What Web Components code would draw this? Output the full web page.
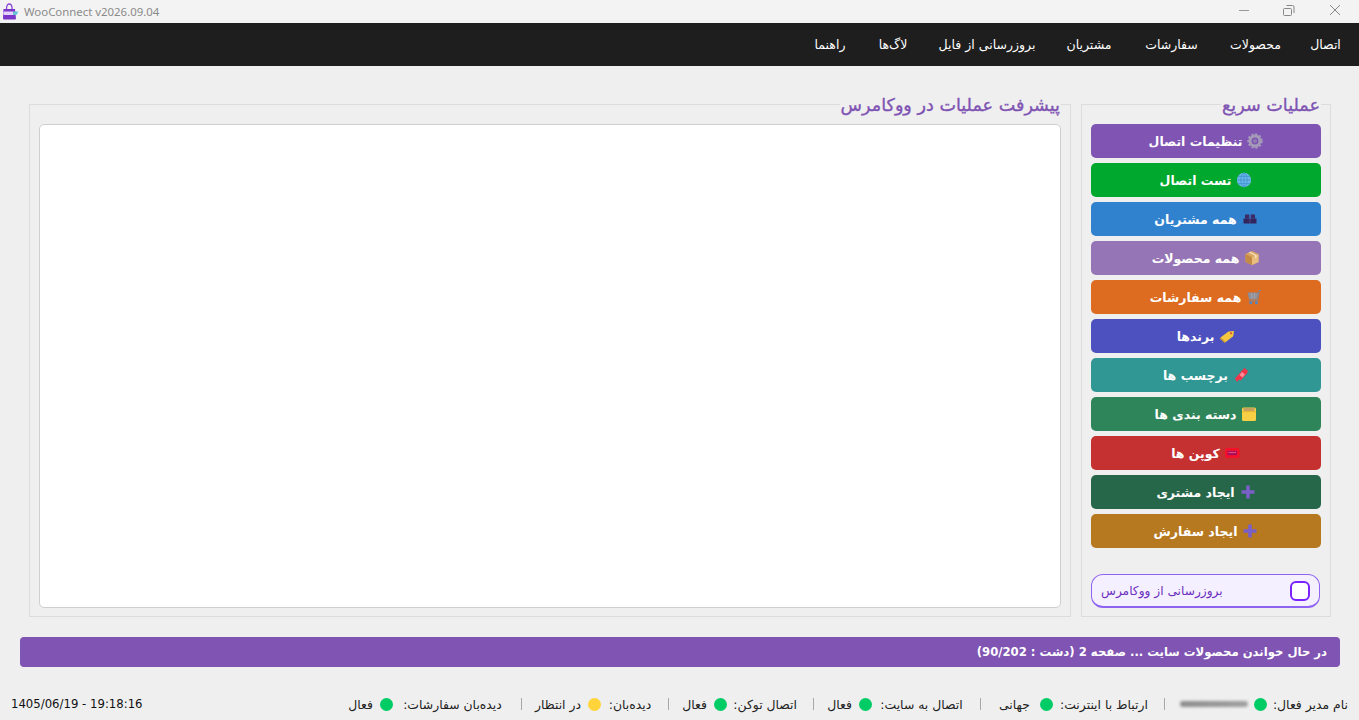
<!DOCTYPE html>
<html lang="fa"><head><meta charset="utf-8"><title>WooConnect</title>
<style>
html,body{margin:0;height:100%;background:#efefef;font-family:"DejaVu Sans",sans-serif}
body{display:flex;flex-direction:column;height:720px;overflow:hidden}
</style></head><body>
<win-titlebar title-text="WooConnect v2026.09.04"></win-titlebar>
<menu-bar items="اتصال:29|محصولات:51|سفارشات:57|مشتریان:48|بروزرسانی از فایل:96|لاگ‌ها:32|راهنما:34"></menu-bar>
<main-area>
  <group-box slot="side" heading="عملیات سریع">
    <action-button color="#7f54b3" icon="gear">تنظیمات اتصال</action-button>
    <action-button color="#00a82d" icon="globe">تست اتصال</action-button>
    <action-button color="#3182ce" icon="busts">همه مشتریان</action-button>
    <action-button color="#9575b5" icon="box">همه محصولات</action-button>
    <action-button color="#dd6b20" icon="cart">همه سفارشات</action-button>
    <action-button color="#4c51bf" icon="tag">برندها</action-button>
    <action-button color="#319795" icon="pin">برچسب ها</action-button>
    <action-button color="#2f855a" icon="folder">دسته بندی ها</action-button>
    <action-button color="#c53030" icon="ticket">کوپن ها</action-button>
    <action-button color="#276749" icon="plus">ایجاد مشتری</action-button>
    <action-button color="#b7791f" icon="plus">ایجاد سفارش</action-button>
    <check-row>بروزرسانی از ووکامرس</check-row>
  </group-box>
  <group-box slot="log" heading="پیشرفت عملیات در ووکامرس"><log-view></log-view></group-box>
</main-area>
<progress-banner>در حال خواندن محصولات سایت ... صفحه 2 (دشت : 90/202)</progress-banner>
<status-bar clock="1405/06/19 - 19:18:16">
  <status-item label="نام مدیر فعال:" lw="74" state="green" blur></status-item>
  <status-item label="ارتباط با اینترنت:" lw="88" state="green" value="جهانی" vw="37"></status-item>
  <status-item label="اتصال به سایت:" lw="85" state="green" value="فعال" vw="23"></status-item>
  <status-item label="اتصال توکن:" lw="63" state="green" value="فعال" vw="23"></status-item>
  <status-item label="دیده‌بان:" lw="44" state="yellow" value="در انتظار" vw="44"></status-item>
  <status-item label="دیده‌بان سفارشات:" lw="105" state="green" value="فعال" vw="23" last></status-item>
</status-bar>
<script>
const ICONS={
gear:'<circle cx="8" cy="8" r="5" fill="none" stroke="#a59ab8" stroke-width="3"/><circle cx="8" cy="8" r="6.800" fill="none" stroke="#a59ab8" stroke-width="1.800" stroke-dasharray="2.200 1.800"/><circle cx="8" cy="8" r="2" fill="#8d7cb0"/>',
globe:'<circle cx="8" cy="8" r="7.200" fill="#6cb6e8"/><g fill="none" stroke="#3f93cf" stroke-width=".8"><ellipse cx="8" cy="8" rx="3.200" ry="7"/><path d="M1 8h14M2 4.400h12M2 11.600h12M8 1v14"/></g>',
busts:'<g fill="#3b2a66"><rect x="3" y="3.500" width="4" height="4"/><rect x="9" y="3.500" width="4" height="4"/><rect x="1.500" y="7.500" width="13" height="5" fill="#34245c"/></g><path d="M8 3.500v9" stroke="#4a4a8c"/>',
box:'<path d="M8 1l6.500 3v8L8 15 1.500 12V4z" fill="#d9a660"/><path d="M8 7.200L14.500 4v8L8 15z" fill="#e8bd7d"/><path d="M1.500 4L8 7.200V15l-6.500-3z" fill="#c48a45"/><path d="M4.500 2.600l6.500 3.100v2.500l1.600-.8V4.900L6.200 1.800z" fill="#f4dfb8"/>',
cart:'<path d="M1.500 3.500h10.800L11 10.500H3z" fill="#8b8b96"/><path d="M3.500 5.800h8.300M3.800 8.100h7.600M5.500 3.500l.5 7M8.500 3.500l-.2 7" stroke="#a9a9b2" stroke-width=".6"/><path d="M15 1.500h-1.800L11.500 12H3" fill="none" stroke="#7f8794" stroke-width="1.200"/><g fill="#4f86c6"><circle cx="4.800" cy="13.800" r="1.500"/><circle cx="10.500" cy="13.800" r="1.500"/></g>',
tag:'<path d="M1.500 9.500L9.500 3.500l5.500-.5-.8 5.200-7.800 6z" fill="#f5c73d"/><path d="M1.500 9.500l5 4.700-.8.800-5-4.500z" fill="#d9a521"/><circle cx="12" cy="5.300" r="1.100" fill="#d9503f"/>',
pin:'<path d="M2 11.500L9.500 3l2-2 3.500 3-1 2.500-6.500 7-1.500-1L4 15z" fill="#f0354b"/><path d="M9 5l3 2.500-2.500 3L6.500 8z" fill="#ff8d98"/>',
folder:'<rect x="1" y="1.500" width="14" height="13.500" rx="1.500" fill="#f8cf45"/><path d="M2.500 2h11v3.500h-11z" fill="#c9a15e"/><path d="M1 5.700h14" stroke="#eeb92e"/>',
ticket:'<rect x="0" y="3" width="14.500" height="10" rx="2.500" fill="#f5102c"/><rect x="2.500" y="5.800" width="9.500" height="4.400" fill="#ac0f5a"/><path d="M3.500 7.500h7.500" stroke="#f0628a" stroke-width=".8"/>',
plus:'<path d="M6.200 1.500h3.600v4.700h4.700v3.600H9.800v4.700H6.200V9.800H1.500V6.200h4.700z" fill="#7a5fc8"/>'
};
function def(name,css,html,init){
  customElements.define(name,class extends HTMLElement{
    constructor(){super();this.attachShadow({mode:'open'});}
    connectedCallback(){this.shadowRoot.innerHTML='<style>'+css+'</style>'+(typeof html==='function'?html(this):html);if(init)init(this);}
  });
}
def('win-titlebar',`:host{display:flex;align-items:center;height:23px;background:#f3f3f3;flex:none}
.ic{width:18px;height:18px;margin:0 5px 0 1px;flex:none}
.t{font:11.400px "Noto Sans",sans-serif;color:#8a8a8a;flex:1;white-space:nowrap}
.c{display:flex;align-items:center;flex:none;padding-right:7px}
.c svg{width:45px;height:23px;display:block}`,
el=>`<svg class="ic" viewBox="0 0 18 18"><path d="M2.500 6h11.500l1 9.500a1 1 0 0 1-1 1H3a1 1 0 0 1-1-1z" fill="#7b35c9"/><path d="M5.500 6C5.500 2.500 6.800 1 8.300 1s2.800 1.500 2.800 5" fill="none" stroke="#8a45d6" stroke-width="1.300"/><rect x="2.500" y="8.500" width="10" height="3.500" rx="1" fill="#e3d4ff"/><path d="M12 8.500h5.500l-2 3.500H12z" fill="#67c4d6"/></svg>
<span class="t">${el.getAttribute('title-text')}</span>
<span class="c"><svg viewBox="0 0 45 23"><path d="M22 10.500h10" stroke="#999" fill="none"/></svg><svg viewBox="0 0 45 23"><path d="M24.500 5.500h6a1.500 1.500 0 0 1 1.500 1.500v6M22.500 8.500h6a1 1 0 0 1 1 1v5a1 1 0 0 1-1 1h-6a1 1 0 0 1-1-1v-5a1 1 0 0 1 1-1z" stroke="#888" fill="none"/></svg><svg viewBox="0 0 45 23"><path d="M23 5l10 10M33 5L23 15" stroke="#888" fill="none"/></svg></span>`);
def('menu-bar',`:host{display:flex;direction:rtl;height:43px;background:#1e1e1e;flex:none;padding-right:4px;align-items:center}
span{color:#fff;font:12.500px "DejaVu Sans",sans-serif;white-space:nowrap;text-align:center;box-sizing:border-box;display:block}`,
el=>el.getAttribute('items').split('|').map(s=>{const[a,w]=s.split(':');return `<span style="width:${+w+30}px">${a}</span>`}).join(''));
def('main-area',`:host{display:flex;direction:rtl;gap:10px;padding:38px 28px 20px 29px;flex:none;height:513px}
::slotted([slot=side]){width:250px;flex:none}
::slotted([slot=log]){flex:1}`,`<slot name="side"></slot><slot name="log"></slot>`);
def('group-box',`:host{display:flex;box-sizing:border-box;position:relative;border:1px solid #dcdcdc;direction:rtl}
.h{position:absolute;top:-10px;right:9px;padding:0 1px;background:linear-gradient(#efefef,#efefef) 0 8px/100% 3px no-repeat;color:#7f54b3;font:400 17.600px/20px "DejaVu Sans",sans-serif;-webkit-text-stroke:.35px #7f54b3;white-space:nowrap}
.b{flex:1;display:flex;flex-direction:column;gap:5px;padding:19px 9px 8px;min-width:0}`,
el=>`<div class="h">${el.getAttribute('heading')}</div><div class="b"><slot></slot></div>`);
def('action-button',`:host{display:flex;height:34px;box-sizing:border-box;border-radius:5px;align-items:center;justify-content:center;gap:5px;direction:rtl;color:#fff;font:700 12.500px "DejaVu Sans",sans-serif;flex:none;white-space:nowrap}
svg{width:16px;height:16px;flex:none}`,
el=>`<svg viewBox="0 0 16 16">${ICONS[el.getAttribute('icon')]}</svg><slot></slot>`,
el=>{el.style.background=el.getAttribute('color')});
def('check-row',`:host{display:flex;margin:21px 1px 0 0;height:34px;box-sizing:border-box;border:1px solid #8f63f2;border-bottom-width:2px;border-radius:12px;background:#f5f0ff;align-items:center;justify-content:space-between;padding:0 9px;direction:rtl;color:#6b2fc0;font:12.200px "DejaVu Sans",sans-serif;white-space:nowrap;flex:none}
i{display:block;width:20px;height:20px;box-sizing:border-box;border:2px solid #7a22ff;border-radius:6px;background:#fff}`,
`<i></i><span><slot></slot></span>`);
def('log-view',`:host{display:block;flex:1;background:#fff;border:1px solid #cfcfcf;border-radius:5px}`,``);
def('progress-banner',`:host{display:flex;align-items:center;box-sizing:border-box;height:30px;margin:0 19px 0 20px;padding:0 13px;background:#7f54b3;border-radius:4px;color:#fff;direction:rtl;font:700 11.650px "DejaVu Sans",sans-serif;flex:none;white-space:nowrap}`,`<slot></slot>`);
def('status-bar',`:host{display:flex;justify-content:space-between;align-items:center;height:20px;margin-top:27px;padding:0 11px;flex:none;color:#222}
.l{display:flex;direction:rtl;order:2}
.k{font:11.700px "DejaVu Sans",sans-serif;direction:ltr;color:#111}`,
el=>`<span class="l"><slot></slot></span><span class="k">${el.getAttribute('clock')}</span>`);
def('status-item',`:host{display:flex;align-items:center;direction:rtl;white-space:nowrap;font:12.400px "DejaVu Sans",sans-serif;color:#222}
.t{display:block;text-align:center}
.d{width:13px;height:13px;border-radius:50%;margin:0 7px;flex:none}
.green{background:#00cc66}.yellow{background:#ffd43b}
.b{width:68px;height:6px;background:linear-gradient(90deg,#8c8c8c,#9f9f9f);filter:blur(1.500px);border-radius:3px;margin-right:-1px}
.s{width:1px;height:12px;background:#a8a8a8;margin:0 15px 0 16px}`,
el=>`<span class="t" style="width:${el.getAttribute('lw')}px">${el.getAttribute('label')}</span><span class="d ${el.getAttribute('state')}"></span>`+
(el.hasAttribute('blur')?'<span class="b"></span>':`<span class="t" style="width:${el.getAttribute('vw')}px">${el.getAttribute('value')}</span>`)+
(el.hasAttribute('last')?'':'<span class="s"></span>'));
</script>
</body></html>
